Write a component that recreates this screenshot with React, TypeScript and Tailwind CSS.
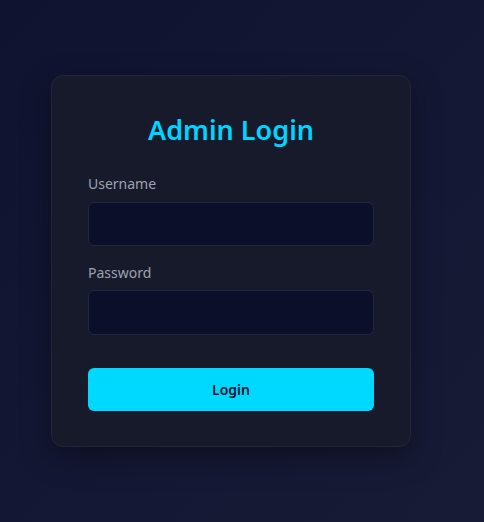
export default function App() {
  return (
    <div
      className="w-[484px] h-[522px] bg-gradient-to-br from-[#0f1330] to-[#181b36] pt-[75px] pl-[51px]"
      style={{ fontFamily: '"Noto Sans", "Open Sans", sans-serif' }}
    >
      <div className="w-[360px] h-[372px] rounded-xl border border-[#23263a] bg-[#171a2b] px-9 pt-9 shadow-[0_10px_30px_rgba(0,0,0,0.35)]">
        <h1 className="text-center text-[27px] leading-[36px] font-semibold text-[#00d4ff]">Admin Login</h1>
        <div className="mt-[26px]">
          <label className="block text-sm leading-5 text-[#9ca3af]">Username</label>
          <input className="mt-2 block w-full h-[44px] rounded-md border border-[#23263f] bg-[#0b0f2a] px-3 text-white outline-none" />
        </div>
        <div className="mt-[17px]">
          <label className="block text-sm leading-5 text-[#9ca3af]">Password</label>
          <input type="password" className="mt-[7px] block w-full h-[45px] rounded-md border border-[#23263f] bg-[#0b0f2a] px-3 text-white outline-none" />
        </div>
        <button className="mt-[33px] w-full h-[43px] rounded-md bg-[#00d9ff] text-sm font-semibold text-[#0f1330]">Login</button>
      </div>
    </div>
  );
}
